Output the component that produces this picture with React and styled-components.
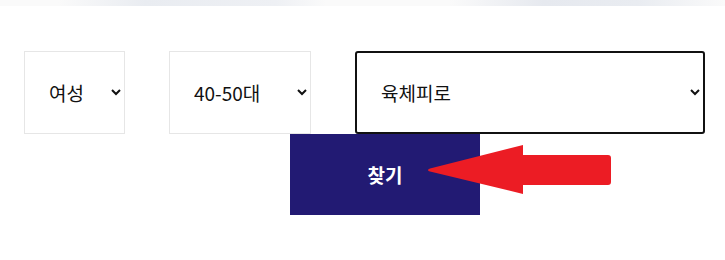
import React from "react"
import styled, { createGlobalStyle } from "styled-components"

const GlobalStyle = createGlobalStyle`
  html, body {
    margin: 0;
    padding: 0;
    background: #fff;
    font-family: "Noto Sans CJK KR", "Noto Sans", sans-serif;
  }
`

const Page = styled.div`
  position: relative;
  width: 725px;
  height: 260px;
  overflow: hidden;
`

const TopBar = styled.div`
  height: 6px;
  background: linear-gradient(90deg, #fafafa 0%, #fafafa 8%, #e9ecf1 20%, #eef0f4 38%, #fafafa 45%, #fafafa 62%, #e6e9ef 75%, #e9ecf1 88%, #fafafa 100%);
`

const Form = styled.div`
  padding: 45px 20px 0 24px;
`

const Row = styled.div`
  display: flex;
  gap: 44px;
`

const Select = styled.select`
  width: ${p => p.$w}px;
  height: 83px;
  box-sizing: border-box;
  padding: 0 6px 0 ${p => p.$pad}px;
  font-family: "Noto Sans CJK KR", "Noto Sans", sans-serif;
  font-size: 19px;
  color: #111;
  background: #fff;
  border: ${p => p.$active ? "2px solid #111" : "1px solid #e6e6e6"};
  border-radius: ${p => p.$active ? "3px" : "0"};
  outline: none;
`

const ButtonRow = styled.div`
  display: flex;
  padding-left: 266px;
`

const FindButton = styled.button`
  width: 190px;
  height: 81px;
  border: none;
  background: #221a73;
  color: #fff;
  font-family: "Noto Sans CJK KR", "Noto Sans", sans-serif;
  font-size: 19px;
  font-weight: 700;
`

const Arrow = styled.svg`
  position: absolute;
  left: 426px;
  top: 143px;
`

export default function App() {
  return (
    <Page>
      <GlobalStyle />
      <TopBar />
      <Form>
        <Row>
          <Select $w={101} $pad={20} defaultValue="여성">
            <option>여성</option>
            <option>남성</option>
          </Select>
          <Select $w={142} $pad={20} defaultValue="40-50대">
            <option>20-30대</option>
            <option>40-50대</option>
            <option>60대 이상</option>
          </Select>
          <Select $w={350} $pad={20} $active defaultValue="육체피로">
            <option>육체피로</option>
            <option>정신피로</option>
          </Select>
        </Row>
        <ButtonRow>
          <FindButton>찾기</FindButton>
        </ButtonRow>
      </Form>
      <Arrow width="190" height="54" viewBox="0 0 190 54">
        <path d="M2 27 Q2 26 4 25.5 L97 2 L97 12 L182 12 Q185 12 185 15 L185 39 Q185 42 182 42 L97 42 L97 51 L4 28.5 Q2 28 2 27 Z" fill="#ec1c24" />
      </Arrow>
    </Page>
  )
}
